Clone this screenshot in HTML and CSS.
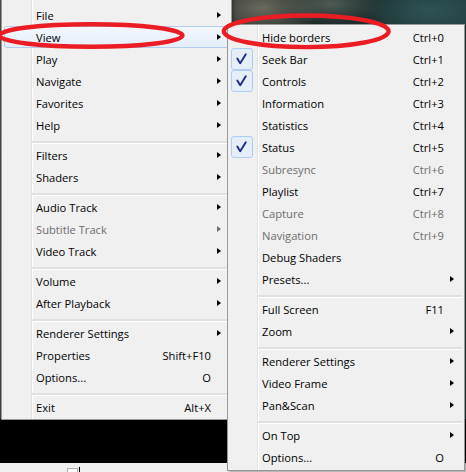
FILE: index.html
```html
<!DOCTYPE html>
<html>
<head>
<meta charset="utf-8">
<link rel="stylesheet" href="styles.css">
</head>
<body>
<div class="stage">
  <div class="video"></div>
  <div class="statusbar"><span class="seek-thumb"></span><span class="seek-tick"></span></div>

  <div class="menu menu-main">
    <div class="row"><span class="icon"></span><span class="label">File</span><span class="key"></span><span class="sub"><i class="arrow"></i></span></div>
    <div class="row hot"><span class="icon"></span><span class="label">View</span><span class="key"></span><span class="sub"><i class="arrow"></i></span></div>
    <div class="row"><span class="icon"></span><span class="label">Play</span><span class="key"></span><span class="sub"><i class="arrow"></i></span></div>
    <div class="row"><span class="icon"></span><span class="label">Navigate</span><span class="key"></span><span class="sub"><i class="arrow"></i></span></div>
    <div class="row"><span class="icon"></span><span class="label">Favorites</span><span class="key"></span><span class="sub"><i class="arrow"></i></span></div>
    <div class="row"><span class="icon"></span><span class="label">Help</span><span class="key"></span><span class="sub"><i class="arrow"></i></span></div>
    <div class="sep"></div>
    <div class="row"><span class="icon"></span><span class="label">Filters</span><span class="key"></span><span class="sub"><i class="arrow"></i></span></div>
    <div class="row"><span class="icon"></span><span class="label">Shaders</span><span class="key"></span><span class="sub"><i class="arrow"></i></span></div>
    <div class="sep"></div>
    <div class="row"><span class="icon"></span><span class="label">Audio Track</span><span class="key"></span><span class="sub"><i class="arrow"></i></span></div>
    <div class="row off"><span class="icon"></span><span class="label">Subtitle Track</span><span class="key"></span><span class="sub"><i class="arrow"></i></span></div>
    <div class="row"><span class="icon"></span><span class="label">Video Track</span><span class="key"></span><span class="sub"><i class="arrow"></i></span></div>
    <div class="sep"></div>
    <div class="row"><span class="icon"></span><span class="label">Volume</span><span class="key"></span><span class="sub"><i class="arrow"></i></span></div>
    <div class="row"><span class="icon"></span><span class="label">After Playback</span><span class="key"></span><span class="sub"><i class="arrow"></i></span></div>
    <div class="sep"></div>
    <div class="row"><span class="icon"></span><span class="label">Renderer Settings</span><span class="key"></span><span class="sub"><i class="arrow"></i></span></div>
    <div class="row"><span class="icon"></span><span class="label">Properties</span><span class="key">Shift+F10</span><span class="sub"></span></div>
    <div class="row"><span class="icon"></span><span class="label">Options...</span><span class="key">O</span><span class="sub"></span></div>
    <div class="sep"></div>
    <div class="row"><span class="icon"></span><span class="label">Exit</span><span class="key">Alt+X</span><span class="sub"></span></div>
  </div>

  <div class="menu menu-view">
    <div class="row"><span class="icon"></span><span class="label">Hide borders</span><span class="key">Ctrl+0</span><span class="sub"></span></div>
    <div class="row"><span class="icon"><span class="check"><svg viewBox="0 0 22 22" width="22" height="22"><path d="M6.3 10.6 L9.2 15.2 L14.8 6.2" fill="none" stroke="#1b2b86" stroke-width="1.9" stroke-linejoin="round" stroke-linecap="round"/></svg></span></span><span class="label">Seek Bar</span><span class="key">Ctrl+1</span><span class="sub"></span></div>
    <div class="row"><span class="icon"><span class="check"><svg viewBox="0 0 22 22" width="22" height="22"><path d="M6.3 10.6 L9.2 15.2 L14.8 6.2" fill="none" stroke="#1b2b86" stroke-width="1.9" stroke-linejoin="round" stroke-linecap="round"/></svg></span></span><span class="label">Controls</span><span class="key">Ctrl+2</span><span class="sub"></span></div>
    <div class="row"><span class="icon"></span><span class="label">Information</span><span class="key">Ctrl+3</span><span class="sub"></span></div>
    <div class="row"><span class="icon"></span><span class="label">Statistics</span><span class="key">Ctrl+4</span><span class="sub"></span></div>
    <div class="row"><span class="icon"><span class="check"><svg viewBox="0 0 22 22" width="22" height="22"><path d="M6.3 10.6 L9.2 15.2 L14.8 6.2" fill="none" stroke="#1b2b86" stroke-width="1.9" stroke-linejoin="round" stroke-linecap="round"/></svg></span></span><span class="label">Status</span><span class="key">Ctrl+5</span><span class="sub"></span></div>
    <div class="row off"><span class="icon"></span><span class="label">Subresync</span><span class="key">Ctrl+6</span><span class="sub"></span></div>
    <div class="row"><span class="icon"></span><span class="label">Playlist</span><span class="key">Ctrl+7</span><span class="sub"></span></div>
    <div class="row off"><span class="icon"></span><span class="label">Capture</span><span class="key">Ctrl+8</span><span class="sub"></span></div>
    <div class="row off"><span class="icon"></span><span class="label">Navigation</span><span class="key">Ctrl+9</span><span class="sub"></span></div>
    <div class="row"><span class="icon"></span><span class="label">Debug Shaders</span><span class="key"></span><span class="sub"></span></div>
    <div class="row"><span class="icon"></span><span class="label">Presets...</span><span class="key"></span><span class="sub"><i class="arrow"></i></span></div>
    <div class="sep"></div>
    <div class="row"><span class="icon"></span><span class="label">Full Screen</span><span class="key">F11</span><span class="sub"></span></div>
    <div class="row"><span class="icon"></span><span class="label">Zoom</span><span class="key"></span><span class="sub"><i class="arrow"></i></span></div>
    <div class="sep"></div>
    <div class="row"><span class="icon"></span><span class="label">Renderer Settings</span><span class="key"></span><span class="sub"><i class="arrow"></i></span></div>
    <div class="row"><span class="icon"></span><span class="label">Video Frame</span><span class="key"></span><span class="sub"><i class="arrow"></i></span></div>
    <div class="row"><span class="icon"></span><span class="label">Pan&amp;Scan</span><span class="key"></span><span class="sub"><i class="arrow"></i></span></div>
    <div class="sep"></div>
    <div class="row"><span class="icon"></span><span class="label">On Top</span><span class="key"></span><span class="sub"><i class="arrow"></i></span></div>
    <div class="row"><span class="icon"></span><span class="label">Options...</span><span class="key">O</span><span class="sub"></span></div>
  </div>

  <svg class="marks" width="466" height="472" viewBox="0 0 466 472">
    <ellipse cx="91" cy="35.5" rx="91.5" ry="11.3" fill="none" stroke="#ec1c24" stroke-width="4.4"/>
    <ellipse cx="306.2" cy="31.3" rx="82.4" ry="15.8" fill="none" stroke="#ec1c24" stroke-width="4.4"/>
  </svg>
</div>
</body>
</html>
```

FILE: styles.css
```css
* { box-sizing: border-box; }

html, body {
  margin: 0;
  padding: 0;
  background: #000;
}

.stage {
  position: relative;
  width: 466px;
  height: 472px;
  overflow: hidden;
  display: flex;
  flex-direction: column;
  font-family: "Open Sans", "Noto Sans", "DejaVu Sans", sans-serif;
  font-size: 11.2px;
  color: #000;
}

.video {
  height: 463px;
  flex: none;
  background:
    linear-gradient(to bottom, rgba(0,0,0,0) 0, rgba(0,0,0,0) 419px, #000 419px),
    radial-gradient(ellipse 60px 30px at 262px 8px, #6a6a5e 0%, rgba(90,90,80,0) 100%),
    radial-gradient(ellipse 50px 20px at 330px 4px, #4f5c55 0%, rgba(60,70,65,0) 100%),
    radial-gradient(ellipse 70px 30px at 430px 10px, #2e5456 0%, rgba(40,80,80,0) 100%),
    linear-gradient(100deg, #4a4a3e 0%, #2a302b 35%, #1d2b29 60%, #1e3a3c 85%, #244446 100%);
}

.statusbar {
  flex: 1;
  background: #f0f0f0;
  position: relative;
}

.seek-thumb {
  position: absolute;
  left: 67px;
  top: 5px;
  width: 11px;
  height: 6px;
  border: 1px solid #b0b0b0;
  background: #fafafa;
}

.seek-tick {
  position: absolute;
  left: 79px;
  top: 4px;
  width: 1px;
  height: 6px;
  background: #000;
}

.menu {
  position: absolute;
  display: flex;
  flex-direction: column;
  border: 1px solid #979797;
  background:
    linear-gradient(to right, #f0f0f0 0, #f0f0f0 29px, #e2e3e3 29px, #e2e3e3 30px, #ffffff 30px, #ffffff 31px, #f0f0f0 31px);
  box-shadow: 2px 2px 2px rgba(0,0,0,0.25);
}

.menu-main {
  left: 1px;
  top: -2px;
  width: 231px;
  padding: 5px 2px 1px 2px;
}

.menu-view {
  left: 227px;
  top: 24px;
  width: 238px;
  height: 447px;
  padding: 1px 2px 2px 2px;
}

.row {
  height: 22px;
  flex: none;
  display: flex;
  align-items: flex-start;
  border: 1px solid transparent;
  border-radius: 3px;
  white-space: nowrap;
}

.row.hot {
  border-color: #b2cdee;
  background: linear-gradient(to bottom, #f3f7fc, #e4edf9);
}

.row.off { color: #6d6d6d; }

.icon {
  width: 31px;
  height: 20px;
  flex: none;
  display: flex;
  align-items: center;
}

.check {
  display: block;
  width: 22px;
  height: 22px;
  flex: none;
  border: 1px solid #aecdf4;
  border-radius: 3px;
  background: #e6eef9;
  position: relative;
}

.check svg {
  position: absolute;
  left: -1px;
  top: -1px;
}

.label {
  flex: 1;
  line-height: 20px;
  padding-top: 1px;
}

.key {
  flex: none;
  text-align: right;
  line-height: 20px;
  padding-top: 1px;
}

.sub {
  width: 17px;
  flex: none;
  height: 20px;
  display: flex;
  align-items: center;
  justify-content: flex-end;
  padding-right: 7px;
}

.arrow {
  display: block;
  width: 0;
  height: 0;
  border-top: 3.5px solid transparent;
  border-bottom: 3.5px solid transparent;
  border-left: 4px solid #000;
}

.row.off .arrow { border-left-color: #6d6d6d; }

.sep {
  flex: none;
  height: 8px;
  margin-left: 28px;
  padding-top: 5px;
}

.sep::before {
  content: "";
  display: block;
  background: #e0e0e0;
  border-bottom: 1px solid #ffffff;
  height: 2px;
}

.marks {
  position: absolute;
  left: 0;
  top: 0;
  pointer-events: none;
}
```
